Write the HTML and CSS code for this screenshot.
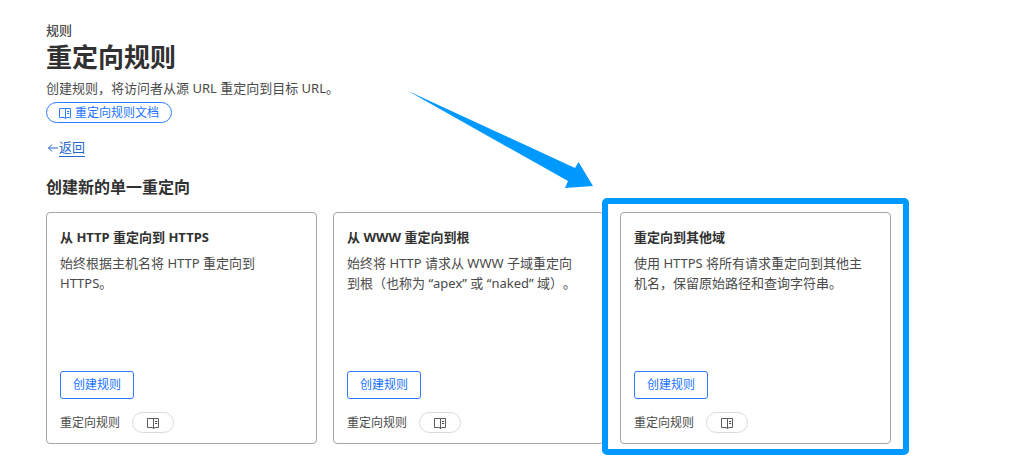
FILE: index.html
```html
<!DOCTYPE html>
<html lang="zh-CN">
<head>
	<meta charset="utf-8">
	<title>重定向规则</title>
	<meta name="viewport" content="width=device-width, initial-scale=1">
	<link rel="stylesheet" href="styles.css">
</head>
<body>
	<!-- book icon, shared by the doc links -->
	<svg class="sprite" aria-hidden="true">
		<symbol id="book" viewBox="0 0 12 12">
			<path d="M6.500 1.500h-6v9h4.500l1.500 1 1.500-1h3.500v-9h-3.500zM6.500 1.500v10" fill="none" stroke="currentColor" stroke-width=".9"/>
			<path d="M8 4.500h2.200M8 6.500h2.200" fill="none" stroke="currentColor"/>
		</symbol>
	</svg>

	<main class="page">
		<header>
			<p class="eyebrow">规则</p>
			<h1>重定向规则</h1>
			<p class="intro">创建规则，将访问者从源 URL 重定向到目标 URL。</p>
			<a class="pill pill-blue" href="#"><svg class="icon"><use href="#book"/></svg>重定向规则文档</a>
		</header>

		<nav class="back">
			<a href="#">
				<svg class="back-arrow" viewBox="0 0 13 13"><path d="M12 7H2.500M6 3.500L2.500 7 6 10.500" fill="none" stroke="currentColor"/></svg><span>返回</span>
			</a>
		</nav>

		<h2>创建新的单一重定向</h2>

		<div class="cards">
			<section class="card">
				<h3>从 HTTP 重定向到 HTTPS</h3>
				<p>始终根据主机名将 HTTP 重定向到 HTTPS。</p>
				<button type="button">创建规则</button>
				<div class="card-foot">
					<span>重定向规则</span>
					<a class="pill" href="#" aria-label="文档"><svg class="icon"><use href="#book"/></svg></a>
				</div>
			</section>

			<section class="card">
				<h3>从 WWW 重定向到根</h3>
				<p>始终将 HTTP 请求从 WWW 子域重定向到根（也称为 “apex” 或 “naked” 域）。</p>
				<button type="button">创建规则</button>
				<div class="card-foot">
					<span>重定向规则</span>
					<a class="pill" href="#" aria-label="文档"><svg class="icon"><use href="#book"/></svg></a>
				</div>
			</section>

			<section class="card">
				<h3>重定向到其他域</h3>
				<p>使用 HTTPS 将所有请求重定向到其他主机名，保留原始路径和查询字符串。</p>
				<button type="button">创建规则</button>
				<div class="card-foot">
					<span>重定向规则</span>
					<a class="pill" href="#" aria-label="文档"><svg class="icon"><use href="#book"/></svg></a>
				</div>
				<div class="highlight"></div>
				<svg class="pointer" viewBox="0 0 186 98"><path d="M0 0L167 77l3.500-6L185 95l-28 2 3-7z" fill="#0099ff"/></svg>
			</section>
		</div>
	</main>
</body>
</html>
```
FILE: styles.css
```css
* {
	box-sizing: border-box;
}
body {
	margin: 0;
	background: #fff;
	color: #4a4a4a;
	font: 13px/20px "Noto Sans", "Noto Sans CJK SC", sans-serif;
	text-spacing-trim: space-all;
}
h1, h2, h3, p {
	margin: 0;
}
h1, h2, h3 {
	color: #313131;
	font-weight: 700;
}
.sprite {
	display: none;
}
.page {
	padding: 20px 133px 20px 46px;
}
.eyebrow {
	font-weight: 500;
}
h1 {
	font-size: 26px;
	line-height: 34px;
}
.intro {
	margin: 4px 0;
}

/* pills */
.pill {
	display: inline-flex;
	align-items: center;
	gap: 4px;
	height: 21px;
	padding: 0 14px;
	border: 1px solid #d9d9d9;
	border-radius: 11px;
	color: #4a4a4a;
	font-size: 12px;
	text-decoration: none;
	vertical-align: top;
}
.pill-blue {
	padding: 0 12px;
	border-color: #2c7cff;
	color: #1a73ff;
}
.icon {
	width: 12px;
	height: 12px;
}

.back {
	margin-top: 14px;
}
.back a {
	display: inline-flex;
	align-items: center;
	color: #2468c9;
	text-decoration: none;
	vertical-align: top;
}
.back span {
	text-decoration: underline;
	text-underline-offset: 4px;
}
.back-arrow {
	width: 13px;
	height: 13px;
}

h2 {
	margin: 18px 0 13px;
	font-size: 16px;
	line-height: 24px;
}

/* cards */
.cards {
	display: grid;
	grid-template-columns: repeat(3, 1fr);
	gap: 16px;
}
.card {
	position: relative;
	display: flex;
	flex-direction: column;
	align-items: flex-start;
	min-height: 232px;
	padding: 14px 13px 10px;
	border: 1px solid #a6a6a6;
	border-radius: 4px;
}
.card h3 {
	margin-bottom: 6px;
	font-size: 13px;
}
.card p {
	padding-right: 8px;
}
.card button {
	height: 28px;
	margin-top: auto;
	padding: 0 12px;
	border: 1px solid #2c7cff;
	border-radius: 3px;
	background: #fff;
	color: #1a73ff;
	font: inherit;
	font-size: 12px;
}
.card-foot {
	display: flex;
	align-items: center;
	gap: 12px;
	margin-top: 13px;
	font-size: 12px;
}

/* marks over the third card */
.highlight {
	position: absolute;
	inset: -15px -19px -12px;
	border: 6px solid #0099ff;
	border-radius: 5px;
	pointer-events: none;
}
.pointer {
	position: absolute;
	top: -122px;
	left: -213px;
	width: 186px;
	height: 98px;
	pointer-events: none;
}
```
